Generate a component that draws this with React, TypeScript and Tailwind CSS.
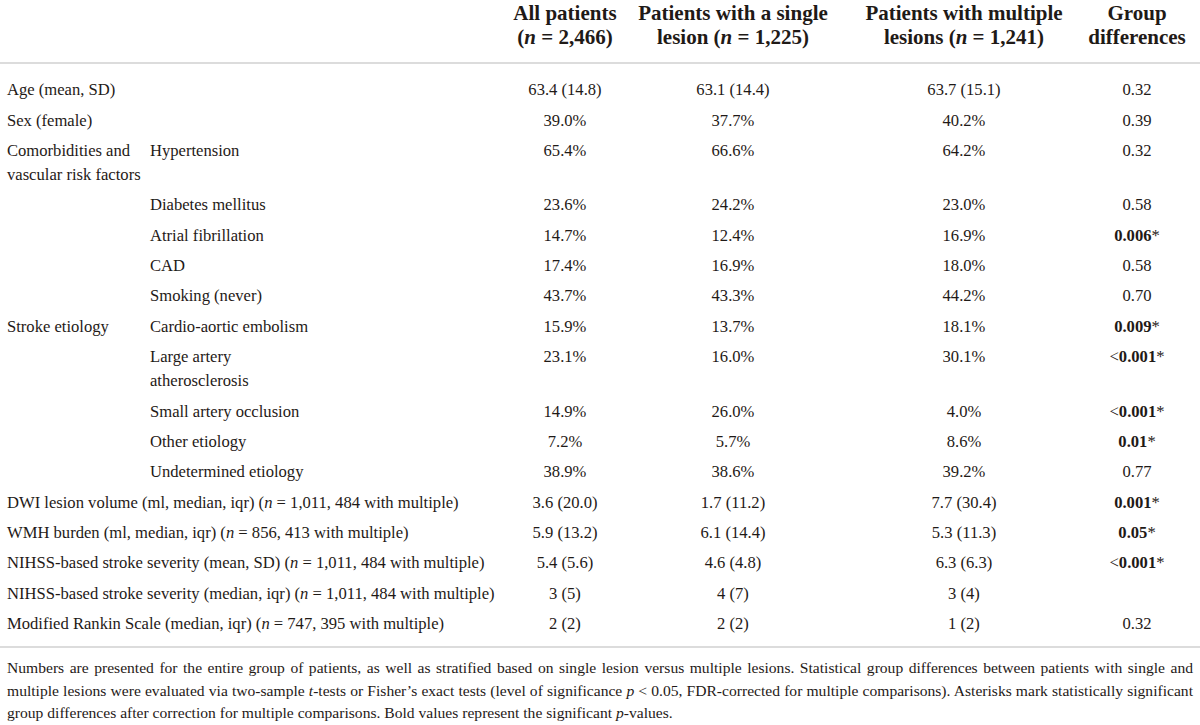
import type { ReactNode } from "react";

const cols = "grid grid-cols-[510px_110px_226px_236px_110px]";

type Row = {
  label?: ReactNode;
  group?: ReactNode;
  sub?: ReactNode;
  vals: string[];
  p?: ReactNode;
};

function N() {
  return <i>n</i>;
}

function Sig({ v, lt }: { v: string; lt?: boolean }) {
  return (
    <span>
      {lt && "<"}
      <b className="font-bold">{v}</b>*
    </span>
  );
}

const rows: Row[] = [
  { label: "Age (mean, SD)", vals: ["63.4 (14.8)", "63.1 (14.4)", "63.7 (15.1)"], p: "0.32" },
  { label: "Sex (female)", vals: ["39.0%", "37.7%", "40.2%"], p: "0.39" },
  {
    group: (
      <>
        Comorbidities and
        <br />
        vascular risk factors
      </>
    ),
    sub: "Hypertension",
    vals: ["65.4%", "66.6%", "64.2%"],
    p: "0.32",
  },
  { sub: "Diabetes mellitus", vals: ["23.6%", "24.2%", "23.0%"], p: "0.58" },
  { sub: "Atrial fibrillation", vals: ["14.7%", "12.4%", "16.9%"], p: <Sig v="0.006" /> },
  { sub: "CAD", vals: ["17.4%", "16.9%", "18.0%"], p: "0.58" },
  { sub: "Smoking (never)", vals: ["43.7%", "43.3%", "44.2%"], p: "0.70" },
  {
    group: "Stroke etiology",
    sub: "Cardio-aortic embolism",
    vals: ["15.9%", "13.7%", "18.1%"],
    p: <Sig v="0.009" />,
  },
  {
    sub: (
      <>
        Large artery
        <br />
        atherosclerosis
      </>
    ),
    vals: ["23.1%", "16.0%", "30.1%"],
    p: <Sig v="0.001" lt />,
  },
  { sub: "Small artery occlusion", vals: ["14.9%", "26.0%", "4.0%"], p: <Sig v="0.001" lt /> },
  { sub: "Other etiology", vals: ["7.2%", "5.7%", "8.6%"], p: <Sig v="0.01" /> },
  { sub: "Undetermined etiology", vals: ["38.9%", "38.6%", "39.2%"], p: "0.77" },
  {
    label: (
      <>
        DWI lesion volume (ml, median, iqr) (<N /> = 1,011, 484 with multiple)
      </>
    ),
    vals: ["3.6 (20.0)", "1.7 (11.2)", "7.7 (30.4)"],
    p: <Sig v="0.001" />,
  },
  {
    label: (
      <>
        WMH burden (ml, median, iqr) (<N /> = 856, 413 with multiple)
      </>
    ),
    vals: ["5.9 (13.2)", "6.1 (14.4)", "5.3 (11.3)"],
    p: <Sig v="0.05" />,
  },
  {
    label: (
      <>
        NIHSS-based stroke severity (mean, SD) (<N /> = 1,011, 484 with multiple)
      </>
    ),
    vals: ["5.4 (5.6)", "4.6 (4.8)", "6.3 (6.3)"],
    p: <Sig v="0.001" lt />,
  },
  {
    label: (
      <>
        NIHSS-based stroke severity (median, iqr) (<N /> = 1,011, 484 with multiple)
      </>
    ),
    vals: ["3 (5)", "4 (7)", "3 (4)"],
  },
  {
    label: (
      <>
        Modified Rankin Scale (median, iqr) (<N /> = 747, 395 with multiple)
      </>
    ),
    vals: ["2 (2)", "2 (2)", "1 (2)"],
    p: "0.32",
  },
];

const headers: ReactNode[] = [
  <>
    All patients
    <br />(<N /> = 2,466)
  </>,
  <>
    Patients with a single
    <br />
    lesion (<N /> = 1,225)
  </>,
  <>
    Patients with multiple
    <br />
    lesions (<N /> = 1,241)
  </>,
  <>
    Group
    <br />
    differences
  </>,
];

export default function App() {
  return (
    <div className="w-[1200px] h-[725px] overflow-hidden bg-white text-[#1f1a17] font-['Liberation_Serif',serif]">
      {/* header */}
      <div className={`${cols} pt-[2px] pb-[13px] border-b-2 border-[#dcdcdc] text-[21px] leading-[23.5px] font-bold`}>
        <div />
        {headers.map((h, i) => (
          <div key={i} className="text-center whitespace-nowrap">
            {h}
          </div>
        ))}
      </div>

      {/* body */}
      <div className="pt-[11px] pb-[7px] border-b-2 border-[#dcdcdc] text-[16.6px] leading-6">
        {rows.map((r, i) => (
          <div key={i} className={`${cols} py-[3.2px]`}>
            <div className="pl-[7px] whitespace-nowrap">
              {r.label ? (
                r.label
              ) : (
                <div className="flex">
                  <div className="w-[143px] shrink-0">{r.group}</div>
                  <div>{r.sub}</div>
                </div>
              )}
            </div>
            {r.vals.map((v, j) => (
              <div key={j} className="text-center whitespace-nowrap">
                {v}
              </div>
            ))}
            <div className="text-center whitespace-nowrap">{r.p}</div>
          </div>
        ))}
      </div>

      {/* footnote */}
      <div className="px-[7px] pt-[9px] text-[15.6px] leading-[22.5px]">
        <p className="whitespace-nowrap text-justify [text-align-last:justify]">
          Numbers are presented for the entire group of patients, as well as stratified based on single lesion versus
          multiple lesions. Statistical group differences between patients with single and
        </p>
        <p className="whitespace-nowrap text-justify [text-align-last:justify]">
          multiple lesions were evaluated via two-sample <i>t</i>-tests or Fisher’s exact tests (level of significance{" "}
          <i>p</i> &lt; 0.05, FDR-corrected for multiple comparisons). Asterisks mark statistically significant
        </p>
        <p className="whitespace-nowrap">
          group differences after correction for multiple comparisons. Bold values represent the significant{" "}
          <i>p</i>-values.
        </p>
      </div>
    </div>
  );
}
